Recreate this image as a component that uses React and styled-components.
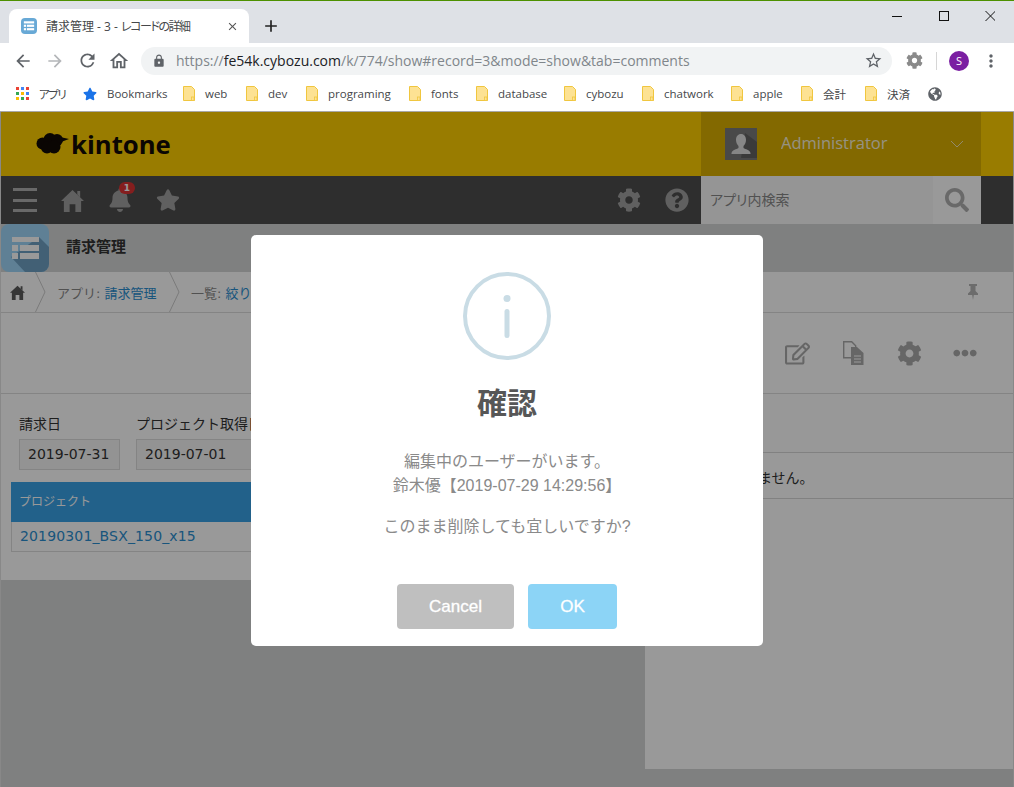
import React from 'react';
import styled, { createGlobalStyle } from 'styled-components';
import {
  FaBell,
  FaStar,
  FaCog,
  FaQuestionCircle,
  FaSearch,
  FaRegEdit,
  FaEllipsisH,
  FaGlobeAmericas,
} from 'react-icons/fa';
import {
  MdArrowBack,
  MdArrowForward,
  MdRefresh,
  MdLock,
  MdStarBorder,
  MdMoreVert,
  MdOutlineHome,
  MdClose,
  MdAdd,
} from 'react-icons/md';

const CJK = '"Noto Sans CJK JP"';
const UI_FONT = `"Open Sans", ${CJK}, sans-serif`;
const PAGE_FONT = `"DejaVu Sans", ${CJK}, sans-serif`;

const GlobalStyle = createGlobalStyle`
  html, body {
    margin: 0;
    padding: 0;
    background: #fff;
    overflow: hidden;
  }
  * {
    box-sizing: border-box;
  }
`;

const bookmarks = [
  { label: 'web', width: 63 },
  { label: 'dev', width: 60 },
  { label: 'programing', width: 103 },
  { label: 'fonts', width: 67 },
  { label: 'database', width: 88 },
  { label: 'cybozu', width: 78 },
  { label: 'chatwork', width: 89 },
  { label: 'apple', width: 70 },
  { label: '会計', width: 64 },
  { label: '決済', width: 63 },
];

const ListGlyph = ({ size }) => (
  <svg width={size} height={size} viewBox="0 0 28 28">
    <rect x="2" y="3" width="24" height="5" fill="#fff" />
    <rect x="2" y="11" width="5" height="5" fill="#fff" />
    <rect x="9" y="11" width="17" height="5" fill="#fff" />
    <rect x="2" y="19" width="5" height="5" fill="#fff" />
    <rect x="9" y="19" width="17" height="5" fill="#fff" />
  </svg>
);

const AppLogo = () => (
  <svg width="48" height="48" viewBox="0 0 48 48">
    <rect width="48" height="48" rx="8" fill="#9fd6f8" />
    <path d="M38 13l10 10v17a8 8 0 0 1-8 8H24L10 33z" fill="#6ea0c4" />
    <rect x="11" y="13" width="27" height="5" fill="#fff" />
    <rect x="11" y="21" width="6" height="6" fill="#fff" />
    <rect x="19" y="21" width="19" height="6" fill="#fff" />
    <rect x="11" y="29" width="6" height="6" fill="#fff" />
    <rect x="19" y="29" width="19" height="6" fill="#fff" />
  </svg>
);

const HouseIcon = ({ size, color }) => (
  <svg width={size} height={size} viewBox="0 0 24 24">
    <path
      d="M12 1L24 12.500h-3V24h-6v-8H9v8H3V12.500H0zM17 2h3v6.500l-3-3z"
      fill={color}
    />
  </svg>
);

const AppsGrid = () => (
  <svg width="13" height="13" viewBox="0 0 13 13">
    {['#ea4335', '#4285f4', '#ea4335', '#34a853', '#fbbc05', '#4285f4', '#fbbc05', '#34a853', '#ea4335'].map((c, i) => (
      <rect key={i} x={(i % 3) * 5} y={Math.floor(i / 3) * 5} width="3" height="3" fill={c} />
    ))}
  </svg>
);

const FolderIcon = () => (
  <svg width="12" height="15" viewBox="0 0 12 15">
    <path d="M.5.5h8l3 3v11H.5z" fill="#fde293" stroke="#f0c63f" />
    <rect x="8.500" y="11" width="2.500" height="3.500" fill="#fde293" stroke="#f0c63f" strokeWidth="0.8" />
  </svg>
);

const KintoneCloud = () => (
  <svg width="33" height="24" viewBox="0 0 33 24">
    <g fill="#120a06">
      <circle cx="6.500" cy="11.500" r="6" />
      <circle cx="14" cy="7.500" r="6.500" />
      <circle cx="21" cy="8" r="6" />
      <circle cx="11" cy="15.500" r="6" />
      <circle cx="18" cy="15" r="6.500" />
      <path d="M24 5l9 2-8 3z" />
    </g>
  </svg>
);

const UserSilhouette = () => (
  <svg width="32" height="32" viewBox="0 0 32 32">
    <path d="M16 30h16V14L20 5z" fill="#000" opacity="0.2" />
    <path
      d="M16 6c3 0 5 2.500 5 6 0 3-1.500 5-2.500 6v2c2 1.500 6 1.500 7 5v1H6.500v-1c1-3.500 5-3.500 7-5v-2c-1-1-2.500-3-2.500-6 0-3.500 2-6 5-6z"
      fill="#e0e0e0"
    />
  </svg>
);

const DocsIcon = () => (
  <svg width="21" height="24" viewBox="0 0 21 24">
    <path d="M.7.7h8l4 4v12H.7z" fill="none" stroke="#aaa" strokeWidth="1.400" />
    <path d="M8 6h6l6.500 6v12H8z" fill="#aaa" />
    <path d="M11 15h7M11 18h7M11 21h7" stroke="#fff" strokeWidth="1.200" />
  </svg>
);

const PinIcon = () => (
  <svg width="10" height="16" viewBox="0 0 10 16">
    <path d="M1 0h8v2H7.500v5L10 9.500V11H5.800L5 16l-.8-5H0V9.500L2.500 7V2H1z" fill="#b4b4b4" />
  </svg>
);

const CrumbArrow = () => (
  <ArrowSvg width="11" height="40" viewBox="0 0 11 40">
    <path d="M.5 0L10 20 .5 40" fill="none" stroke="#ccc" />
  </ArrowSvg>
);

const InfoIcon = () => (
  <svg width="88" height="88" viewBox="0 0 88 88">
    <circle cx="44" cy="44" r="42" fill="none" stroke="#c9dce5" strokeWidth="4" />
    <circle cx="44" cy="26.500" r="3.500" fill="#c9dce5" />
    <rect x="41.500" y="37" width="5" height="29" rx="2.500" fill="#c9dce5" />
  </svg>
);

const App = () => (
  <Root>
    <GlobalStyle />
    <TabStrip>
      <Tab>
        <Favicon>
          <ListGlyph size={12} />
        </Favicon>
        <TabTitle>
          請求管理 - 3 - <Kana>レコードの詳細</Kana>
        </TabTitle>
        <MdClose size={13} color="#555" />
      </Tab>
      <NewTab>
        <MdAdd size={20} color="#222" />
      </NewTab>
      <WindowControls>
        <svg width="146" height="12" viewBox="0 0 146 12">
          <path d="M43 6.500h10" stroke="#111" strokeWidth="1" />
          <rect x="90.500" y="1.500" width="9" height="9" fill="none" stroke="#111" />
          <path d="M136.500 1l10 10M146.500 1l-10 10" stroke="#111" strokeWidth="1" />
        </svg>
      </WindowControls>
    </TabStrip>

    <Toolbar>
      <NavButton><MdArrowBack size={20} color="#5f6368" /></NavButton>
      <NavButton><MdArrowForward size={20} color="#b4b6b9" /></NavButton>
      <NavButton><MdRefresh size={21} color="#5f6368" /></NavButton>
      <NavButton><MdOutlineHome size={22} color="#5f6368" /></NavButton>
      <Omnibox>
        <MdLock size={14} color="#5f6368" />
        <Url>
          https://<strong>fe54k.cybozu.com</strong>/k/774/show#record=3&amp;mode=show&amp;tab=comments
        </Url>
        <MdStarBorder size={19} color="#5f6368" />
      </Omnibox>
      <ExtensionSlot>
        <FaCog size={17} color="#8a8a8a" />
      </ExtensionSlot>
      <ToolbarDivider />
      <Avatar>S</Avatar>
      <MdMoreVert size={20} color="#5f6368" />
    </Toolbar>

    <BookmarkBar>
      <BookmarkItem $width={67}>
        <AppsGrid />
        <Kana>アプリ</Kana>
      </BookmarkItem>
      <BookmarkItem $width={100}>
        <FaStar size={14} color="#1a73e8" />
        <span>Bookmarks</span>
      </BookmarkItem>
      {bookmarks.map((item) => (
        <BookmarkItem key={item.label} $width={item.width}>
          <FolderIcon />
          <span>{item.label}</span>
        </BookmarkItem>
      ))}
      <FaGlobeAmericas size={14} color="#5f6368" />
    </BookmarkBar>

    <Page>
      <Header>
        <Logo>
          <KintoneCloud />
          <LogoText>kintone</LogoText>
        </Logo>
        <UserPanel>
          <UserAvatar>
            <UserSilhouette />
          </UserAvatar>
          <UserName>Administrator</UserName>
          <svg width="14" height="8" viewBox="0 0 14 8">
            <path d="M1 1l6 6 6-6" fill="none" stroke="#fff" strokeOpacity="0.7" />
          </svg>
        </UserPanel>
      </Header>

      <GlobalNav>
        <Hamburger>
          <i />
          <i />
          <i />
        </Hamburger>
        <HouseIcon size={23} color="#a0a0a0" />
        <BellWrap>
          <FaBell size={24} color="#a0a0a0" />
          <Badge>1</Badge>
        </BellWrap>
        <FaStar size={24} color="#a0a0a0" />
        <NavSpacer />
        <FaCog size={24} color="#a0a0a0" />
        <FaQuestionCircle size={24} color="#a0a0a0" />
        <SearchBox>
          <SearchInput>アプリ内検索</SearchInput>
          <SearchButton>
            <FaSearch size={24} color="#b0b0b0" />
          </SearchButton>
        </SearchBox>
      </GlobalNav>

      <AppBar>
        <AppLogo />
        <AppTitle>請求管理</AppTitle>
      </AppBar>

      <Breadcrumb>
        <CrumbHome>
          <HouseIcon size={15} color="#5a5a5a" />
        </CrumbHome>
        <CrumbArrow />
        <Crumb $width={123}>
          アプリ: <a>請求管理</a>
        </Crumb>
        <CrumbArrow />
        <Crumb $width={200}>
          一覧: <a>絞り込み</a>
        </Crumb>
        <NavSpacer />
        <PinSlot>
          <PinIcon />
        </PinSlot>
      </Breadcrumb>

      <RecordToolbar>
        <ToolSlot><FaRegEdit size={25} color="#aaa" /></ToolSlot>
        <ToolSlot><DocsIcon /></ToolSlot>
        <ToolSlot><FaCog size={25} color="#aaa" /></ToolSlot>
        <ToolSlot><FaEllipsisH size={24} color="#aaa" /></ToolSlot>
      </RecordToolbar>

      <Body>
        <RecordColumn>
          <FieldRow>
            <Field>
              <FieldLabel>請求日</FieldLabel>
              <FieldValue $width={101}>2019-07-31</FieldValue>
            </Field>
            <Field>
              <FieldLabel>プロジェクト取得日</FieldLabel>
              <FieldValue $width={140}>2019-07-01</FieldValue>
            </Field>
          </FieldRow>
          <TableHead>プロジェクト</TableHead>
          <TableRow>
            <a>20190301_BSX_150_x15</a>
          </TableRow>
        </RecordColumn>
        <CommentPanel>
          <CommentForm />
          <CommentEmpty>コメントはありません。</CommentEmpty>
        </CommentPanel>
      </Body>

      <Backdrop>
        <Modal>
          <InfoIcon />
          <ModalTitle>確認</ModalTitle>
          <ModalText>
            編集中のユーザーがいます。
            <br />
            鈴木優【2019-07-29 14:29:56】
          </ModalText>
          <ModalQuestion>このまま削除しても宜しいですか?</ModalQuestion>
          <ModalButtons>
            <ModalButton $width={117} $color="#bfbfbf">Cancel</ModalButton>
            <ModalButton $width={89} $color="#8cd4f6">OK</ModalButton>
          </ModalButtons>
        </Modal>
      </Backdrop>
    </Page>
  </Root>
);

const Root = styled.div`
  width: 1014px;
  height: 787px;
  display: flex;
  flex-direction: column;
  overflow: hidden;
  background: #fff;
  border-top: 1px solid #4d9100;
  font-family: ${UI_FONT};
  font-feature-settings: "palt";
`;

const TabStrip = styled.div`
  height: 42px;
  flex: none;
  display: flex;
  align-items: flex-end;
  padding-left: 9px;
  background: #dee1e6;
`;

const Tab = styled.div`
  width: 240px;
  height: 34px;
  display: flex;
  align-items: center;
  padding: 0 10px 0 12px;
  background: #fff;
  border-radius: 8px 8px 0 0;
`;

const Favicon = styled.div`
  width: 16px;
  height: 16px;
  display: flex;
  align-items: center;
  justify-content: center;
  border-radius: 4px;
  background: #68a9d6;
`;

const TabTitle = styled.div`
  flex: 1;
  margin-left: 9px;
  font-size: 12px;
  color: #45474a;
  white-space: nowrap;
`;

const Kana = styled.span`
  letter-spacing: -1.500px;
`;

const NewTab = styled.div`
  width: 44px;
  height: 34px;
  display: flex;
  align-items: center;
  justify-content: center;
`;

const WindowControls = styled.div`
  margin-left: auto;
  align-self: flex-start;
  padding: 9px 19px 0 0;
  display: flex;
`;

const Toolbar = styled.div`
  height: 35px;
  flex: none;
  display: flex;
  align-items: center;
  padding: 0 13px 0 7px;
  background: #fff;
`;

const NavButton = styled.div`
  width: 32px;
  display: flex;
  justify-content: center;
`;

const Omnibox = styled.div`
  width: 751px;
  height: 28px;
  margin-left: 6px;
  display: flex;
  align-items: center;
  padding: 0 9px 0 11px;
  background: #f1f3f4;
  border-radius: 14px;
`;

const Url = styled.div`
  flex: 1;
  margin-left: 10px;
  font-size: 14px;
  color: #80868b;
  white-space: nowrap;

  strong {
    font-weight: 400;
    color: #202124;
  }
`;

const ExtensionSlot = styled.div`
  width: 44px;
  display: flex;
  justify-content: center;
`;

const ToolbarDivider = styled.div`
  width: 1px;
  height: 18px;
  background: #d6d6d6;
`;

const Avatar = styled.div`
  width: 20px;
  height: 20px;
  margin: 0 12px;
  display: flex;
  align-items: center;
  justify-content: center;
  border-radius: 50%;
  background: #7b1fa2;
  color: #fff;
  font-size: 11px;
`;

const BookmarkBar = styled.div`
  height: 34px;
  flex: none;
  display: flex;
  align-items: center;
  padding: 0 0 2px 16px;
  background: #fff;
  border-bottom: 1px solid #a8a8a8;
`;

const BookmarkItem = styled.div`
  width: ${(props) => props.$width}px;
  flex: none;
  display: flex;
  align-items: center;
  gap: 10px;
  font-size: 11.500px;
  color: #45474a;
  white-space: nowrap;
`;

const Page = styled.div`
  position: relative;
  flex: 1;
  min-height: 0;
  display: flex;
  flex-direction: column;
  border-left: 1px solid #888;
  border-right: 1px solid #888;
  background: #d4d6d5;
  font-family: ${PAGE_FONT};
  font-feature-settings: normal;
`;

const Header = styled.div`
  height: 64px;
  flex: none;
  display: flex;
  align-items: center;
  justify-content: space-between;
  padding: 0 32px 0 35px;
  background: #ffcf00;
`;

const Logo = styled.div`
  display: flex;
  align-items: center;
  gap: 2px;
`;

const LogoText = styled.div`
  font-family: "Open Sans", sans-serif;
  font-size: 25.700px;
  font-weight: 700;
  color: #120a06;
`;

const UserPanel = styled.div`
  width: 280px;
  height: 64px;
  display: flex;
  align-items: center;
  padding: 0 17px 0 24px;
  background: #dbaf00;
`;

const UserAvatar = styled.div`
  width: 32px;
  height: 32px;
  background: #7a7a7a;
`;

const UserName = styled.div`
  flex: 1;
  margin-left: 24px;
  padding-bottom: 4px;
  font-family: "Open Sans", sans-serif;
  font-size: 16.500px;
  color: #fff;
  opacity: 0.85;
`;

const GlobalNav = styled.div`
  height: 48px;
  flex: none;
  display: flex;
  align-items: center;
  gap: 24px;
  padding: 0 32px 0 12px;
  background: #4d4d4d;
`;

const Hamburger = styled.div`
  width: 24px;
  height: 24px;
  display: flex;
  flex-direction: column;
  justify-content: space-between;

  i {
    display: block;
    height: 3px;
    background: #b0b0b0;
  }
`;

const BellWrap = styled.div`
  position: relative;
  height: 24px;
`;

const Badge = styled.div`
  position: absolute;
  top: -6px;
  left: 11px;
  width: 16px;
  height: 12px;
  border-radius: 6px;
  background: #d33;
  color: #fff;
  font-size: 9px;
  font-weight: 700;
  line-height: 12px;
  text-align: center;
`;

const NavSpacer = styled.div`
  flex: 1;
`;

const SearchBox = styled.div`
  width: 280px;
  height: 48px;
  margin-left: -12px;
  display: flex;
  background: #fff;
`;

const SearchInput = styled.div`
  flex: 1;
  padding-left: 9px;
  font-size: 14px;
  line-height: 48px;
  color: #888;
  background: #f8f8f8;
  font-feature-settings: "palt";
`;

const SearchButton = styled.div`
  width: 48px;
  display: flex;
  align-items: center;
  justify-content: center;
  background: #fff;
`;

const AppBar = styled.div`
  height: 48px;
  flex: none;
  display: flex;
  align-items: center;
  gap: 17px;
  background: #d4d6d5;
`;

const AppTitle = styled.div`
  padding-bottom: 6px;
  font-size: 15px;
  font-weight: 700;
  color: #333;
`;

const Breadcrumb = styled.div`
  height: 41px;
  flex: none;
  display: flex;
  align-items: center;
  background: #fff;
  border-bottom: 1px solid #ddd;
`;

const ArrowSvg = styled.svg`
  flex: none;
  align-self: flex-start;
`;

const CrumbHome = styled.div`
  width: 34px;
  display: flex;
  padding-left: 9px;
`;

const Crumb = styled.div`
  width: ${(props) => props.$width}px;
  flex: none;
  padding-left: 11px;
  font-size: 13px;
  color: #888;
  white-space: nowrap;

  a {
    color: #2a8ed0;
  }
`;

const PinSlot = styled.div`
  width: 80px;
  display: flex;
  justify-content: center;
`;

const RecordToolbar = styled.div`
  height: 81px;
  flex: none;
  display: flex;
  align-items: center;
  justify-content: flex-end;
  padding-right: 20px;
  background: #fff;
  border-bottom: 1px solid #ddd;
`;

const ToolSlot = styled.div`
  width: 56px;
  display: flex;
  justify-content: center;
`;

const Body = styled.div`
  flex: 1;
  min-height: 0;
  display: flex;
  align-items: flex-start;
`;

const RecordColumn = styled.div`
  width: 644px;
  height: 186px;
  padding: 20px 0 0 10px;
  background: #fff;
`;

const FieldRow = styled.div`
  display: flex;
  gap: 16px;
  padding-left: 8px;
`;

const Field = styled.div`
  display: flex;
  flex-direction: column;
`;

const FieldLabel = styled.div`
  font-size: 14px;
  line-height: 21px;
  color: #333;
  white-space: nowrap;
`;

const FieldValue = styled.div`
  width: ${(props) => props.$width}px;
  height: 31px;
  margin-top: 4px;
  padding-left: 8px;
  border: 1px solid #ddd;
  background: #f5f5f5;
  font-size: 14px;
  line-height: 29px;
  color: #333;
`;

const TableHead = styled.div`
  height: 40px;
  margin-top: 12px;
  padding-left: 8px;
  background: #2f9ee6;
  font-size: 12px;
  line-height: 40px;
  color: #fff;
  opacity: 0.95;
`;

const TableRow = styled.div`
  height: 30px;
  padding-left: 8px;
  border: 1px solid #ddd;
  border-top: none;
  font-size: 14px;
  letter-spacing: 0.15px;
  line-height: 28px;
  color: #2a8ed0;
`;

const CommentPanel = styled.div`
  width: 368px;
  height: 375px;
  background: #fff;
`;

const CommentForm = styled.div`
  height: 59px;
  border-bottom: 1px solid #d8d8d8;
  background: #fdfdfd;
`;

const CommentEmpty = styled.div`
  height: 46px;
  padding-left: 15px;
  border-bottom: 1px solid #d8d8d8;
  font-size: 14px;
  line-height: 50px;
  color: #333;
`;

const Backdrop = styled.div`
  position: absolute;
  top: 0;
  right: 0;
  bottom: 0;
  left: 0;
  display: flex;
  justify-content: center;
  padding-top: 123px;
  background: rgba(0, 0, 0, 0.4);
`;

const Modal = styled.div`
  width: 512px;
  height: 411px;
  display: flex;
  flex-direction: column;
  align-items: center;
  padding-top: 37px;
  border-radius: 5px;
  background: #fff;
  font-family: "Liberation Sans", ${CJK}, sans-serif;
`;

const ModalTitle = styled.div`
  margin-top: 21px;
  font-family: ${CJK}, sans-serif;
  font-size: 30px;
  font-weight: 700;
  line-height: 40px;
  color: #575757;
`;

const ModalText = styled.div`
  margin-top: 29px;
  font-size: 16px;
  line-height: 24px;
  color: #8a8a8a;
  text-align: center;
`;

const ModalQuestion = styled(ModalText)`
  margin-top: 17px;
`;

const ModalButtons = styled.div`
  margin-top: 45px;
  display: flex;
  gap: 14px;
`;

const ModalButton = styled.div`
  width: ${(props) => props.$width}px;
  height: 45px;
  border-radius: 4px;
  background: ${(props) => props.$color};
  color: #fff;
  font-size: 17px;
  line-height: 45px;
  text-align: center;
  -webkit-text-stroke: 0.3px #fff;
`;

export default App;
